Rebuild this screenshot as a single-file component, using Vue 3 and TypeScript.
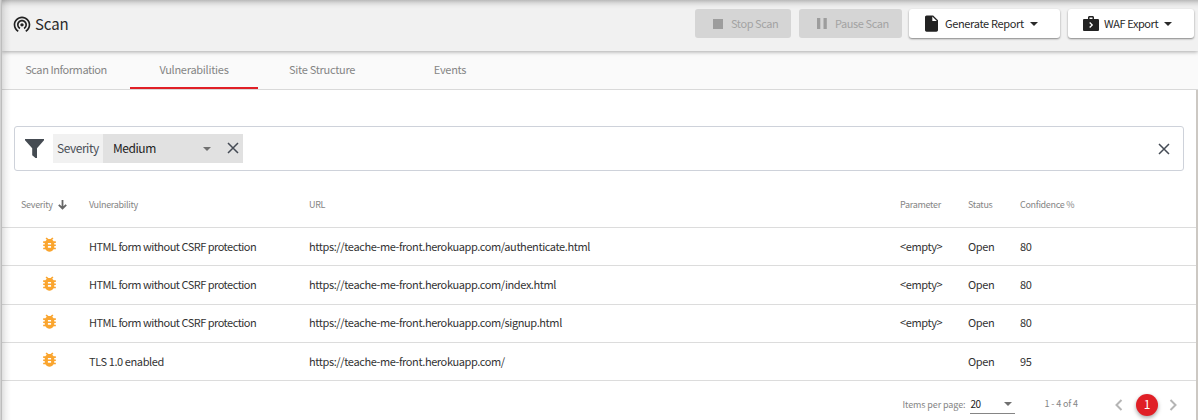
<script setup lang="ts">
interface Finding {
  name: string
  url: string
  parameter: string
  status: string
  confidence: number
}

const tabs: string[] = ['Scan Information', 'Vulnerabilities', 'Site Structure', 'Events']
const activeTab = 'Vulnerabilities'

const host = 'https://teache-me-front.herokuapp.com/'
const findings: Finding[] = [
  { name: 'HTML form without CSRF protection', url: host + 'authenticate.html', parameter: '<empty>', status: 'Open', confidence: 80 },
  { name: 'HTML form without CSRF protection', url: host + 'index.html', parameter: '<empty>', status: 'Open', confidence: 80 },
  { name: 'HTML form without CSRF protection', url: host + 'signup.html', parameter: '<empty>', status: 'Open', confidence: 80 },
  { name: 'TLS 1.0 enabled', url: host, parameter: '', status: 'Open', confidence: 95 },
]
</script>

<template>
  <div class="page">
    <header class="header">
      <svg class="scan-icon" viewBox="0 0 24 24" width="20" height="20"><path d="M12 11c-1.100 0-2 .9-2 2s.9 2 2 2 2-.9 2-2-.9-2-2-2zm6 2c0-3.310-2.690-6-6-6s-6 2.690-6 6c0 2.220 1.210 4.150 3 5.190l1-1.740c-1.190-.7-2-1.970-2-3.450 0-2.210 1.790-4 4-4s4 1.790 4 4c0 1.480-.81 2.750-2 3.450l1 1.740c1.790-1.040 3-2.970 3-5.190zM12 3C6.480 3 2 7.480 2 13c0 3.700 2.010 6.920 4.990 8.650l1-1.730C5.610 18.530 4 15.960 4 13c0-4.420 3.580-8 8-8s8 3.580 8 8c0 2.960-1.610 5.530-4 6.920l1 1.730c2.990-1.730 5-4.950 5-8.650 0-5.520-4.480-10-10-10z" /></svg>
      <h1>Scan</h1>
      <div class="actions">
        <button class="btn stop" disabled>
          <svg viewBox="0 0 10 10" width="10" height="10"><path d="M0 0h10v10H0z" /></svg>
          <span>Stop Scan</span>
        </button>
        <button class="btn pause" disabled>
          <svg viewBox="0 0 10 11" width="10" height="11"><path d="M0 0h3.300v11H0zM6.500 0h3.300v11H6.500z" /></svg>
          <span>Pause Scan</span>
        </button>
        <button class="btn report">
          <svg viewBox="4 2 16 20" width="13" height="17"><path d="M6 2c-1.100 0-1.990.9-1.990 2L4 20c0 1.100.89 2 1.990 2H18c1.100 0 2-.9 2-2V8l-6-6H6zm7 7V3.500L18.500 9H13z" /></svg>
          <span>Generate Report</span>
          <i class="caret"></i>
        </button>
        <button class="btn waf">
          <svg viewBox="0 0 16 15" width="16" height="15"><path fill-rule="evenodd" d="M5 3V1.500C5 .7 5.600 0 6.500 0h3c.9 0 1.500.7 1.500 1.500V3h3.700c.8 0 1.300.5 1.300 1.300v9.400c0 .8-.5 1.300-1.300 1.300H1.300C.5 15 0 14.500 0 13.700V4.300C0 3.500.5 3 1.300 3H5zm1.500 0h3V1.500h-3V3zM6.200 6.900 8.300 9l-2.100 2.100.9.9 3-3-3-3z" /></svg>
          <span>WAF Export</span>
          <i class="caret"></i>
        </button>
      </div>
    </header>

    <nav class="tabs">
      <a v-for="tab in tabs" :key="tab" :class="{ active: tab === activeTab }">{{ tab }}</a>
    </nav>

    <main class="content">
      <section class="filter">
        <svg class="funnel" viewBox="0 0 19 19" width="19" height="19"><path d="M0 0h19v1.200L12 9.300V19h-1.500L7.200 16.300V9.300L0 1.200z" /></svg>
        <span class="chip-name">Severity</span>
        <span class="chip-value">
          <span>Medium</span>
          <i class="caret"></i>
          <svg viewBox="0 0 12 12" width="12" height="12"><path d="M1 1l10 10M11 1L1 11" /></svg>
        </span>
        <svg class="clear" viewBox="0 0 12 12" width="12" height="12"><path d="M1 1l10 10M11 1L1 11" /></svg>
      </section>

      <section class="table">
        <div class="row head">
          <span class="sev">Severity
            <svg viewBox="0 0 9 10" width="9" height="10"><path d="M4.500 0v8.500M.8 4.800l3.700 3.700L8.200 4.800" /></svg>
          </span>
          <span>Vulnerability</span>
          <span>URL</span>
          <span>Parameter</span>
          <span>Status</span>
          <span>Confidence %</span>
        </div>
        <div v-for="f in findings" :key="f.url" class="row">
          <span class="sev">
            <svg class="bug" viewBox="0 0 24 24" width="19" height="19"><path d="M20 8h-2.810c-.45-.78-1.070-1.450-1.820-1.960L17 4.410 15.590 3l-2.170 2.170C12.960 5.060 12.490 5 12 5c-.49 0-.96.06-1.410.17L8.410 3 7 4.410l1.620 1.630C7.880 6.550 7.260 7.220 6.810 8H4v2h2.090c-.05.33-.09.66-.09 1v1H4v2h2v1c0 .34.04.67.09 1H4v2h2.810c1.040 1.790 2.970 3 5.190 3s4.150-1.210 5.190-3H20v-2h-2.090c.05-.33.09-.66.09-1v-1h2v-2h-2v-1c0-.34-.04-.67-.09-1H20V8zm-6 8h-4v-2h4v2zm0-4h-4v-2h4v2z" /></svg>
          </span>
          <span class="name">{{ f.name }}</span>
          <span>{{ f.url }}</span>
          <span>{{ f.parameter }}</span>
          <span>{{ f.status }}</span>
          <span>{{ f.confidence }}</span>
        </div>
      </section>

      <footer class="pager">
        <span class="label">Items per page:</span>
        <span class="select">20 <i class="caret"></i></span>
        <span class="range">1 - 4 of 4</span>
        <svg class="chev" viewBox="0 0 8 12" width="8" height="12"><path d="M6.500 1L1.500 6l5 5" /></svg>
        <span class="current">1</span>
        <svg class="chev" viewBox="0 0 8 12" width="8" height="12"><path d="M1.500 1l5 5-5 5" /></svg>
      </footer>
    </main>
    <div class="edge-shadow"></div>
  </div>
</template>

<style>
body {
  overflow: hidden;
  background: #fff;
}
</style>

<style scoped>
.page {
  position: relative;
  box-sizing: border-box;
  width: 1198px;
  height: 420px;
  padding-left: 2px;
  overflow: hidden;
  font-family: "Noto Sans CJK SC", "Noto Sans", sans-serif;
  font-size: 11px;
  line-height: 16px;
  color: #333;
}
svg {
  display: block;
  flex: none;
}
.edge-shadow {
  position: absolute;
  inset: 0 auto 0 0;
  width: 11px;
  background: linear-gradient(90deg, #d2d2d2 0 1px, #bdbdbd 1px 2px, rgba(0, 0, 0, 0.12) 2px, rgba(0, 0, 0, 0.05) 6px, transparent);
}
.header {
  position: relative;
  display: flex;
  align-items: flex-start;
  box-sizing: border-box;
  height: 51px;
  background: linear-gradient(#b9b9b9, #d9d9d9 3px, #ebebeb 6px, #f1f1f1 9px);
  box-shadow: 0 1px 4px rgba(0, 0, 0, 0.33);
}
.scan-icon {
  margin: 14px 0 0 10px;
  fill: #222;
}
h1 {
  margin: 12px 0 0 3px;
  font-size: 15px;
  font-weight: 400;
  line-height: 24px;
  letter-spacing: -0.1px;
  color: #2a2a2a;
}
.actions {
  display: flex;
  gap: 8px;
  margin: 9px 4px 0 auto;
}
.btn {
  display: flex;
  align-items: center;
  box-sizing: border-box;
  height: 29px;
  padding: 0;
  border: 0;
  border-radius: 3px;
  background: #fff;
  box-shadow: 0 1px 2px rgba(0, 0, 0, 0.45);
  font: inherit;
  letter-spacing: -0.42px;
  color: #2a2a2a;
  fill: #222;
}
.btn span { padding-bottom: 2px; }
.btn:disabled {
  background: #d5d5d5;
  box-shadow: none;
  color: #a3a3a3;
  fill: #9d9d9d;
}
.stop { width: 96px; padding-left: 18px; }
.stop span { margin-left: 8px; }
.pause { width: 103px; padding-left: 18px; }
.pause span { margin-left: 8px; }
.report { width: 151px; margin-left: -1px; padding-left: 16px; letter-spacing: -0.34px; }
.report span { margin-left: 7px; }
.waf { width: 126px; padding-left: 15px; }
.waf span { margin-left: 5px; }
.caret {
  width: 0;
  height: 0;
  border: solid transparent;
  border-width: 4px 4px 0;
  border-top-color: currentColor;
}
.btn .caret { margin-left: 6px; }
.tabs {
  display: flex;
  height: 38px;
  border-bottom: 1px solid #d9d9d9;
  background: #fafafa;
}
.tabs a {
  box-sizing: border-box;
  width: 128px;
  height: 38px;
  line-height: 36px;
  text-align: center;
  letter-spacing: -0.27px;
  color: #858585;
}
.tabs a:first-child { letter-spacing: -0.43px; }
.tabs a.active {
  border-bottom: 2px solid #e01f26;
}
.content {
  box-sizing: border-box;
  height: 330px;
  padding-top: 36px;
  border-right: 2px solid #ccc8c3;
}
.filter {
  display: flex;
  align-items: center;
  box-sizing: border-box;
  height: 45px;
  margin: 0 12px;
  padding: 0 13px 0 10px;
  border: 1px solid #ced2da;
  border-radius: 3px;
  font-size: 12px;
  letter-spacing: -0.45px;
}
.funnel { fill: #454b52; }
.chip-name {
  box-sizing: border-box;
  width: 50px;
  height: 29px;
  margin-left: 9px;
  padding-left: 4px;
  background: #f1f1f1;
  line-height: 27px;
  color: #4a4f57;
}
.chip-value {
  display: flex;
  align-items: center;
  box-sizing: border-box;
  width: 140px;
  height: 29px;
  padding: 0 4px 0 10px;
  background: #e1e1e1;
  color: #222;
}
.chip-value span { padding-bottom: 2px; }
.chip-value .caret {
  margin: 1px 16px 0 auto;
  border-top-color: #707070;
}
.chip-value svg,
.clear {
  fill: none;
  stroke: #454b55;
  stroke-width: 1.500;
}
.chip-value svg { margin-bottom: 1px; }
.clear { margin-left: auto; }
.table { margin-top: 12px; }
.row {
  display: grid;
  grid-template-columns: 68px 220px 591px 68px 52px 1fr;
  align-items: center;
  box-sizing: border-box;
  height: 38px;
  padding: 0 0 2px 19px;
  border-bottom: 1px solid #dcdcdc;
  letter-spacing: -0.4px;
}
.row:nth-child(3) { height: 39px; }
.row:nth-child(4) { padding-bottom: 3px; }
.name { letter-spacing: -0.51px; }
.row:last-child .name { letter-spacing: -0.4px; }
.row.head {
  height: 45px;
  padding-bottom: 0;
  font-size: 9px;
  letter-spacing: -0.3px;
  color: #858585;
}
.sev {
  display: flex;
  align-items: center;
}
.sev svg {
  margin-left: 5px;
  fill: none;
  stroke: #666;
  stroke-width: 1.800;
}
.sev .bug {
  margin: -3px 0 0 19px;
  fill: #faa52f;
  stroke: none;
}
.row:nth-child(3) .bug,
.row:nth-child(4) .bug {
  margin-top: -1px;
}
.pager {
  display: flex;
  align-items: center;
  justify-content: flex-end;
  height: 47px;
  padding-right: 19px;
  font-size: 9px;
  letter-spacing: -0.1px;
  color: #858585;
}
.select {
  display: flex;
  align-items: center;
  justify-content: space-between;
  width: 45px;
  height: 17px;
  margin-left: 5px;
  border-bottom: 1px solid #858585;
  font-size: 10px;
  letter-spacing: -0.4px;
  color: #222;
}
.select .caret {
  margin-right: 3px;
  border-width: 4px 4px 0;
  border-top-color: #707070;
}
.range { margin: 0 37px 0 29px; padding-bottom: 1px; }
.chev {
  fill: none;
  stroke: #b5b5b5;
  stroke-width: 2;
}
.current {
  width: 22px;
  height: 22px;
  margin: 0 11px 0 13px;
  border-radius: 50%;
  background: #e01f26;
  box-shadow: 0 2px 4px rgba(0, 0, 0, 0.35);
  font-size: 12px;
  line-height: 20px;
  text-align: center;
  color: #fff;
}
.label { margin-right: -1px; padding-right: 1px; }
</style>
